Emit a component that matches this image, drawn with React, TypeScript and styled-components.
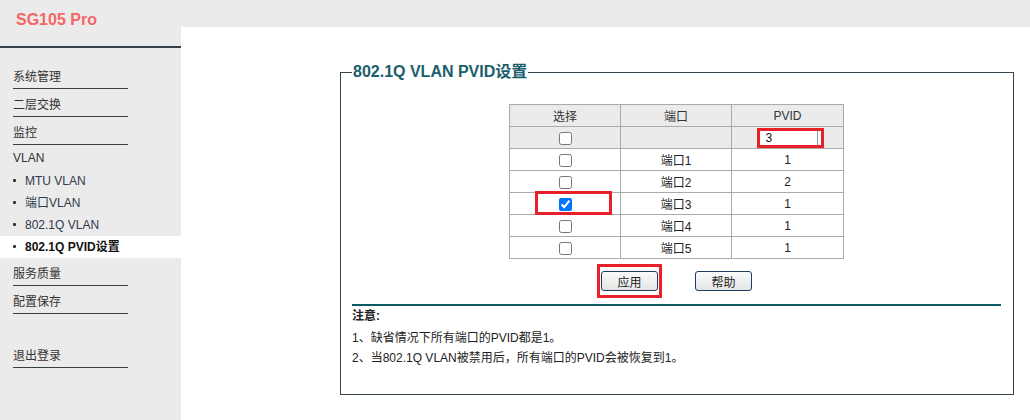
import React from "react";
import styled, { createGlobalStyle } from "styled-components";

const FONT = `"Liberation Sans", Arial, "Noto Sans CJK SC", sans-serif`;

const GlobalStyle = createGlobalStyle`
  html, body {
    margin: 0;
    padding: 0;
    height: 100%;
  }
  body {
    font-family: ${FONT};
    font-size: 12px;
    color: #333;
    background: #ffffff;
  }
  #root {
    min-height: 100%;
    display: flex;
  }
`;

const menuTop = ["系统管理", "二层交换", "监控"];
const vlanItems = ["MTU VLAN", "端口VLAN", "802.1Q VLAN", "802.1Q PVID设置"];
const menuBottom = ["服务质量", "配置保存"];

const ports = [
  { name: "端口1", pvid: 1, checked: false },
  { name: "端口2", pvid: 2, checked: false },
  { name: "端口3", pvid: 1, checked: true },
  { name: "端口4", pvid: 1, checked: false },
  { name: "端口5", pvid: 1, checked: false },
];

const notes = [
  "1、缺省情况下所有端口的PVID都是1。",
  "2、当802.1Q VLAN被禁用后，所有端口的PVID会被恢复到1。",
];

function App() {
  return (
    <>
      <GlobalStyle />
      <Page>
        <Sidebar>
          <Brand>SG105 Pro</Brand>
          <Menu>
            {menuTop.map((label) => (
              <MenuItem key={label}>{label}</MenuItem>
            ))}
            <MenuGroup>VLAN</MenuGroup>
            {vlanItems.map((label) => (
              <SubItem key={label} $active={label === "802.1Q PVID设置"}>
                {label}
              </SubItem>
            ))}
            {menuBottom.map((label) => (
              <MenuItem key={label}>{label}</MenuItem>
            ))}
            <MenuItem $gap>退出登录</MenuItem>
          </Menu>
        </Sidebar>

        <Main>
          <Content>
            <Panel>
              <PanelTitle>802.1Q VLAN PVID设置</PanelTitle>

              <PortTable>
                <colgroup>
                  <col width={111} />
                  <col width={111} />
                  <col width={112} />
                </colgroup>
                <thead>
                  <tr>
                    <HeadCell>选择</HeadCell>
                    <HeadCell>端口</HeadCell>
                    <HeadCell>PVID</HeadCell>
                  </tr>
                </thead>
                <tbody>
                  <tr>
                    <Cell $shaded>
                      <Check type="checkbox" readOnly />
                    </Cell>
                    <Cell $shaded />
                    <Cell $shaded>
                      <PvidInput defaultValue="3" />
                    </Cell>
                  </tr>
                  {ports.map((p) => (
                    <tr key={p.name}>
                      <Cell>
                        {p.checked ? (
                          <Marked $inset="-7px -40px -4px -24px">
                            <Check type="checkbox" defaultChecked />
                          </Marked>
                        ) : (
                          <Check type="checkbox" readOnly />
                        )}
                      </Cell>
                      <Cell>{p.name}</Cell>
                      <Cell>{p.pvid}</Cell>
                    </tr>
                  ))}
                </tbody>
              </PortTable>

              <ButtonRow>
                <Marked $inset="-7px -4px -7px -4px">
                  <Button>应用</Button>
                </Marked>
                <Button>帮助</Button>
              </ButtonRow>

              <NoteBlock>
                <NoteTitle>注意:</NoteTitle>
                {notes.map((n) => (
                  <NoteLine key={n}>{n}</NoteLine>
                ))}
              </NoteBlock>
            </Panel>
          </Content>
        </Main>
      </Page>
    </>
  );
}

export default App;

const Page = styled.div`
  display: flex;
  flex: 1;
  min-height: 420px;
`;

const Sidebar = styled.nav`
  width: 181px;
  flex-shrink: 0;
  background: #ebebeb;
  display: flex;
  flex-direction: column;
`;

const Brand = styled.div`
  height: 36px;
  padding: 10px 0 0 16px;
  line-height: 20px;
  font-size: 16px;
  font-weight: bold;
  color: #f46565;
  border-bottom: 2px solid #343f46;
`;

const Menu = styled.ul`
  list-style: none;
  margin: 13px 0 0;
  padding: 0;
`;

const MenuItem = styled.li<{ $gap?: boolean }>`
  margin: ${(p) => (p.$gap ? "26px" : "0")} 0 0 13px;
  width: 115px;
  padding: 7px 0 2px;
  line-height: 18px;
  color: #333;
  border-bottom: 1px solid #343f46;
`;

const MenuGroup = styled.li`
  padding: 2px 0 1px 13px;
  line-height: 22px;
  color: #333;
`;

const SubItem = styled.li<{ $active?: boolean }>`
  position: relative;
  height: 22px;
  line-height: 22px;
  padding-left: 25px;
  background: ${(p) => (p.$active ? "#ffffff" : "transparent")};
  color: ${(p) => (p.$active ? "#111" : "#2e3a4c")};
  font-weight: ${(p) => (p.$active ? "bold" : "normal")};

  &::before {
    content: "";
    position: absolute;
    left: 13px;
    top: 9px;
    width: 3px;
    height: 3px;
    border-radius: 1px;
    background: #333;
  }
`;

const Main = styled.main`
  flex: 1;
  background: #ebebeb;
  padding-top: 27px;
  display: flex;
  flex-direction: column;
`;

const Content = styled.section`
  flex: 1;
  background: #ffffff;
  padding: 36px 16px 26px 159px;
`;

const Panel = styled.fieldset`
  margin: 0;
  padding: 0 12px 26px 11px;
  border: 1px solid #34444c;
  min-width: 0;
`;

const PanelTitle = styled.legend`
  padding: 0 1px;
  margin: 0;
  font-size: 16px;
  line-height: 18px;
  font-weight: bold;
  color: #1b5e6b;
`;

const PortTable = styled.table`
  margin: 23px auto 0;
  width: 334px;
  table-layout: fixed;
  border-collapse: collapse;
`;

const HeadCell = styled.th`
  height: 21px;
  padding: 0;
  border: 1px solid #aaaaaa;
  background: #ebebeb;
  font-weight: normal;
  color: #333;
  text-align: center;
  vertical-align: middle;
`;

const Cell = styled.td<{ $shaded?: boolean }>`
  height: 21px;
  padding: 0;
  border: 1px solid #aaaaaa;
  background: ${(p) => (p.$shaded ? "#ebebeb" : "#ffffff")};
  color: #222;
  text-align: center;
  vertical-align: middle;
`;

const Check = styled.input`
  width: 13px;
  height: 13px;
  margin: 0;
  vertical-align: middle;
`;

const Marked = styled.span<{ $inset: string }>`
  position: relative;
  display: inline-block;
  line-height: 0;

  &::after {
    content: "";
    position: absolute;
    inset: ${(p) => p.$inset};
    border: 3px solid #e8202a;
    pointer-events: none;
  }
`;

const PvidInput = styled.input`
  box-sizing: border-box;
  width: 67px;
  height: 20px;
  margin: 0 0 0 5px;
  padding: 0 0 0 6px;
  border: 3px solid #e8202a;
  box-shadow: inset -3px 0 0 #ffffff, inset -4px 0 0 #9a9a9a;
  font-family: ${FONT};
  font-size: 12px;
  color: #111;
  vertical-align: middle;
  outline: none;
`;

const ButtonRow = styled.div`
  display: flex;
  justify-content: center;
  align-items: center;
  gap: 37px;
  margin-top: 12px;
  height: 20px;
`;

const Button = styled.button`
  box-sizing: border-box;
  width: 57px;
  height: 20px;
  padding: 0;
  border: 1px solid #1f3d5c;
  border-radius: 3px;
  background: linear-gradient(#fbfbfb, #e4e4e4);
  font-family: ${FONT};
  font-size: 12px;
  color: #222;
`;

const NoteBlock = styled.div`
  margin-top: 13px;
  border-top: 2px solid #0b5a63;
  color: #222;
`;

const NoteTitle = styled.div`
  line-height: 20px;
  margin-bottom: 2px;
  font-weight: bold;
`;

const NoteLine = styled.div`
  line-height: 20px;
`;
